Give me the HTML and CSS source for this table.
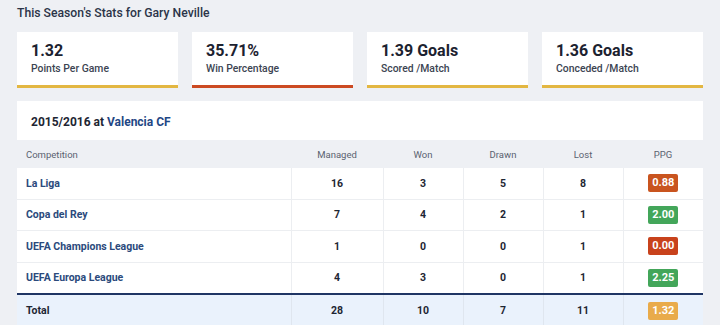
FILE: index.html
```html
<!DOCTYPE html>
<html>
<head>
<meta charset="utf-8">
<link rel="stylesheet" href="styles.css">
</head>
<body>
<div class="page">
  <h1 class="title">This Season's Stats for Gary Neville</h1>
  <div class="cards">
    <div class="card bar-yellow"><div class="num">1.32</div><div class="lbl">Points Per Game</div></div>
    <div class="card bar-red"><div class="num">35.71%</div><div class="lbl">Win Percentage</div></div>
    <div class="card bar-yellow"><div class="num">1.39 Goals</div><div class="lbl">Scored /Match</div></div>
    <div class="card bar-yellow"><div class="num">1.36 Goals</div><div class="lbl">Conceded /Match</div></div>
  </div>
  <div class="panel">
    <div class="panel-head">2015/2016 at <span class="club">Valencia CF</span></div>
    <table class="stats">
      <thead>
        <tr><th class="c-name">Competition</th><th class="c-man">Managed</th><th>Won</th><th>Drawn</th><th>Lost</th><th>PPG</th></tr>
      </thead>
      <tbody>
        <tr><td class="c-name link">La Liga</td><td>16</td><td>3</td><td>5</td><td>8</td><td><span class="badge b-orange">0.88</span></td></tr>
        <tr><td class="c-name link">Copa del Rey</td><td>7</td><td>4</td><td>2</td><td>1</td><td><span class="badge b-green">2.00</span></td></tr>
        <tr><td class="c-name link">UEFA Champions League</td><td>1</td><td>0</td><td>0</td><td>1</td><td><span class="badge b-red">0.00</span></td></tr>
        <tr class="last"><td class="c-name link">UEFA Europa League</td><td>4</td><td>3</td><td>0</td><td>1</td><td><span class="badge b-green">2.25</span></td></tr>
        <tr class="total"><td class="c-name">Total</td><td>28</td><td>10</td><td>7</td><td>11</td><td><span class="badge b-yellow">1.32</span></td></tr>
      </tbody>
    </table>
  </div>
</div>
</body>
</html>
```
FILE: styles.css
```css
html, body {
  margin: 0;
  padding: 0;
  background: #eef0f4;
  font-family: Roboto, "Liberation Sans", sans-serif;
  color: #1e2633;
}
.page {
  padding: 0 17px;
}
.title {
  margin: 0;
  padding-top: 3px;
  line-height: 20px;
  height: 29px;
  font-size: 12.2px;
  font-weight: 500;
  color: #2b3448;
}
.cards {
  display: grid;
  grid-template-columns: repeat(4, 1fr);
  gap: 14px;
}
.card {
  background: #fff;
  height: 56px;
  box-sizing: border-box;
  padding: 8px 14px 0;
  border-bottom: 3px solid #e3b742;
}
.bar-red { border-bottom-color: #cc4a22; }
.num {
  font-size: 16px;
  font-weight: 700;
  line-height: 21px;
  color: #1c2230;
}
.lbl {
  font-size: 10.4px;
  line-height: 15px;
  font-weight: 500;
  color: #3c4452;
}
.panel {
  margin-top: 13px;
  background: #fff;
}
.panel-head {
  height: 39px;
  box-sizing: border-box;
  padding: 13px 14px 0;
  font-size: 12px;
  line-height: 16px;
  font-weight: 700;
  color: #1e2633;
}
.club { color: #1f4785; }
.stats {
  width: 100%;
  border-collapse: collapse;
  table-layout: fixed;
}
.stats th {
  background: #eef0f4;
  height: 28px;
  padding: 0;
  font-size: 9.5px;
  font-weight: 400;
  color: #5a6270;
  text-align: center;
}
.stats th.c-name { width: 265px; text-align: left; padding-left: 9px; }
.stats th.c-man { width: 92px; }
.stats td {
  height: 30.5px;
  padding: 0;
  text-align: center;
  font-size: 10.5px;
  font-weight: 700;
  color: #1e2633;
  border-bottom: 1px solid #eceef1;
  border-left: 1px solid #eceef1;
}
.stats td.c-name {
  text-align: left;
  padding-left: 9px;
  border-left: none;
}
.stats td.link { color: #2b4a7c; }
.stats tr.last td { border-bottom: 2px solid #1f3564; }
.stats tr.total td {
  background: #eaf2fc;
  border-bottom: none;
  height: 31px;
  border-left-color: #dfe6ef;
}
.badge {
  display: inline-block;
  width: 30px;
  height: 18px;
  line-height: 18px;
  border-radius: 2px;
  color: #fff;
  font-size: 11px;
  font-weight: 700;
}
.b-orange { background: #c9541f; }
.b-green { background: #43a65a; }
.b-red { background: #c8421c; }
.b-yellow { background: #e9ab4a; }
```
